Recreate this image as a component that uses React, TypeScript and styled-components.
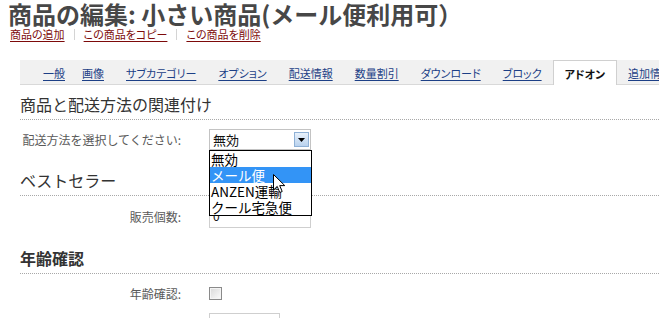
import styled, { createGlobalStyle } from "styled-components"

const GlobalStyle = createGlobalStyle`
html, body {
  margin: 0;
  padding: 0;
  background: #ffffff;
}
body {
  font-family: "Noto Sans CJK JP", "Liberation Sans", sans-serif;
}
`

const Page = styled.div`
width: 659px;
height: 318px;
overflow: hidden;
position: relative;
display: flex;
flex-direction: column;
`

const Title = styled.h1`
margin: 0;
padding-left: 8px;
height: 27px;
font-size: 24px;
line-height: 27px;
font-weight: 700;
color: #474747;
white-space: nowrap;
`

const LinkBar = styled.div`
display: flex;
align-items: center;
height: 14px;
padding-left: 10px;
font-feature-settings: "palt";
`

const ActionLink = styled.a`
font-size: 11px;
line-height: 14px;
color: #7d0a0a;
text-decoration: underline;
text-underline-offset: 2px;
`

const Separator = styled.span`
width: 1px;
height: 11px;
margin: 0 9px;
background: #d4d4d4;
`

const TabStrip = styled.ul`
list-style: none;
margin: 19px 0 0 20px;
padding: 0 0 0 12px;
height: 27px;
display: flex;
align-items: flex-end;
background: #f1f1f1;
border-bottom: 1px solid #d9d9d9;
white-space: nowrap;
font-feature-settings: "palt";
`

const Tab = styled.li<{ $active?: boolean }>`
height: 25px;
padding: 0 11px;
font-size: 11px;
line-height: 26px;
box-sizing: border-box;
margin-bottom: -1px;
background: ${p => (p.$active ? "#ffffff" : "transparent")};
border: ${p => (p.$active ? "1px solid #d0d0d0" : "none")};
border-bottom: none;
color: ${p => (p.$active ? "#111111" : "#1c3f86")};
font-weight: ${p => (p.$active ? 700 : 400)};
text-decoration: ${p => (p.$active ? "none" : "underline")};
text-underline-offset: 2px;
&:first-child {
  padding-right: 6px;
}
`

const Section = styled.section<{ $gap: number }>`
margin: ${p => p.$gap}px 0 0 20px;
`

const Heading = styled.h2<{ $bold?: boolean }>`
margin: 0;
font-size: 16px;
line-height: 20px;
padding-bottom: 5px;
font-weight: ${p => (p.$bold ? 700 : 400)};
color: #333333;
border-bottom: 1px dotted #a8a8a8;
`

const Row = styled.div<{ $top: number; $height: number }>`
display: flex;
align-items: center;
padding-top: ${p => p.$top}px;
height: ${p => p.$height}px;
`

const Label = styled.label`
width: 161px;
margin-right: 28px;
text-align: right;
font-size: 12px;
color: #5a5a5a;
white-space: nowrap;
`

const SelectWrap = styled.div`
position: relative;
width: 102px;
height: 21px;
box-sizing: border-box;
border: 1px solid #c3c3c3;
background: #ffffff;
display: flex;
align-items: center;
justify-content: space-between;
padding: 0 1px 0 3px;
font-size: 13px;
color: #111111;
`

const ArrowButton = styled.span`
width: 15px;
height: 15px;
box-sizing: border-box;
border: 1px solid #8fb1d6;
background: linear-gradient(#e8f1fb, #b9d2ee);
display: flex;
align-items: center;
justify-content: center;
`

const ListBox = styled.ul`
position: absolute;
z-index: 3;
top: 20px;
left: -1px;
width: 103px;
margin: 0;
padding: 0;
list-style: none;
box-sizing: border-box;
border: 1px solid #000000;
background: #ffffff;
`

const Option = styled.li<{ $selected?: boolean }>`
height: 16px;
line-height: 16px;
padding-left: 1px;
font-size: 13.5px;
white-space: nowrap;
color: ${p => (p.$selected ? "#ffffff" : "#000000")};
background: ${p => (p.$selected ? "#3394f6" : "transparent")};
`

const Cursor = styled.svg`
position: absolute;
left: 63px;
top: 23px;
`

const TextInput = styled.div<{ $width: number; $height: number }>`
width: ${p => p.$width}px;
height: ${p => p.$height}px;
box-sizing: border-box;
border: 1px solid #cfcfcf;
padding: 4px 0 0 3px;
font-size: 12px;
line-height: 14px;
color: #111111;
`

const Checkbox = styled.span`
width: 13px;
height: 13px;
box-sizing: border-box;
border: 1px solid #8a8a8a;
background: linear-gradient(135deg, #d8d8d8, #fbfbfb);
box-shadow: inset 0 0 0 1px #f4f4f4;
`

const Spacer = styled.div`
width: 189px;
`

const tabs = ["一般", "画像", "サブカテゴリー", "オプション", "配送情報", "数量割引", "ダウンロード", "ブロック", "アドオン", "追加情報"]

export default function App() {
  return (
    <>
      <GlobalStyle />
      <Page>
        <Title>商品の編集: 小さい商品(メール便利用可）</Title>
        <LinkBar>
          <ActionLink>商品の追加</ActionLink>
          <Separator />
          <ActionLink>この商品をコピー</ActionLink>
          <Separator />
          <ActionLink>この商品を削除</ActionLink>
        </LinkBar>

        <TabStrip>
          {tabs.map(t => (
            <Tab key={t} $active={t === "アドオン"}>{t}</Tab>
          ))}
        </TabStrip>

        <Section $gap={9}>
          <Heading>商品と配送方法の関連付け</Heading>
          <Row $top={9} $height={21}>
            <Label>配送方法を選択してください:</Label>
            <SelectWrap>
              <span>無効</span>
              <ArrowButton>
                <svg width="7" height="4" viewBox="0 0 7 4">
                  <path d="M0 0 H7 L3.5 4 Z" fill="#000" />
                </svg>
              </ArrowButton>
              <ListBox>
                <Option>無効</Option>
                <Option $selected>メール便</Option>
                <Option>ANZEN運輸</Option>
                <Option>クール宅急便</Option>
                <Cursor width="13" height="20" viewBox="0 0 13 20">
                  <path d="M0.5 0.5 L0.5 16 L4.2 12.4 L6.8 18.5 L9.2 17.5 L6.7 11.6 L11.8 11.6 Z" fill="#fff" stroke="#000" strokeWidth="1" strokeLinejoin="miter" />
                </Cursor>
              </ListBox>
            </SelectWrap>
          </Row>
        </Section>

        <Section $gap={20}>
          <Heading>ベストセラー</Heading>
          <Row $top={8} $height={24}>
            <Label>販売個数:</Label>
            <TextInput $width={102} $height={24}>0</TextInput>
          </Row>
        </Section>

        <Section $gap={20}>
          <Heading $bold>年齢確認</Heading>
          <Row $top={9} $height={20}>
            <Label>年齢確認:</Label>
            <Checkbox />
          </Row>
          <Row $top={10} $height={20}>
            <Spacer />
            <TextInput $width={71} $height={20} />
          </Row>
        </Section>
      </Page>
    </>
  )
}
